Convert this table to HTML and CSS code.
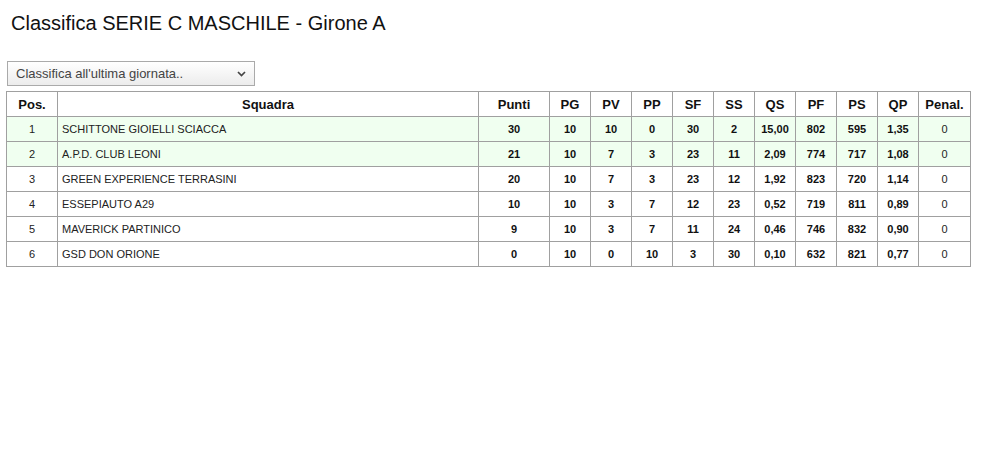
FILE: index.html
```html
<!DOCTYPE html>
<html lang="it">
<head>
<meta charset="utf-8">
<title>Classifica</title>
<link rel="stylesheet" href="styles.css">
</head>
<body>
<div class="page">
  <h1 class="title">Classifica SERIE C MASCHILE - Girone A</h1>
  <div class="select">
    <span>Classifica all'ultima giornata..</span>
    <svg class="chev" width="9" height="6" viewBox="0 0 9 6"><path d="M1 1 L4.5 4.5 L8 1" fill="none" stroke="#444" stroke-width="1.7"/></svg>
  </div>
  <table class="standings">
    <colgroup>
      <col class="c-pos"><col class="c-team"><col class="c-pts">
      <col class="c-n"><col class="c-n"><col class="c-n"><col class="c-n"><col class="c-n">
      <col class="c-n"><col class="c-n"><col class="c-n"><col class="c-n"><col class="c-pen">
    </colgroup>
    <thead>
      <tr><th>Pos.</th><th>Squadra</th><th>Punti</th><th>PG</th><th>PV</th><th>PP</th><th>SF</th><th>SS</th><th>QS</th><th>PF</th><th>PS</th><th>QP</th><th>Penal.</th></tr>
    </thead>
    <tbody>
      <tr class="hl"><td>1</td><td class="team">SCHITTONE GIOIELLI SCIACCA</td><td class="b">30</td><td class="b">10</td><td class="b">10</td><td class="b">0</td><td class="b">30</td><td class="b">2</td><td class="b">15,00</td><td class="b">802</td><td class="b">595</td><td class="b">1,35</td><td>0</td></tr>
      <tr class="hl"><td>2</td><td class="team">A.P.D. CLUB LEONI</td><td class="b">21</td><td class="b">10</td><td class="b">7</td><td class="b">3</td><td class="b">23</td><td class="b">11</td><td class="b">2,09</td><td class="b">774</td><td class="b">717</td><td class="b">1,08</td><td>0</td></tr>
      <tr><td>3</td><td class="team">GREEN EXPERIENCE TERRASINI</td><td class="b">20</td><td class="b">10</td><td class="b">7</td><td class="b">3</td><td class="b">23</td><td class="b">12</td><td class="b">1,92</td><td class="b">823</td><td class="b">720</td><td class="b">1,14</td><td>0</td></tr>
      <tr><td>4</td><td class="team">ESSEPIAUTO A29</td><td class="b">10</td><td class="b">10</td><td class="b">3</td><td class="b">7</td><td class="b">12</td><td class="b">23</td><td class="b">0,52</td><td class="b">719</td><td class="b">811</td><td class="b">0,89</td><td>0</td></tr>
      <tr><td>5</td><td class="team">MAVERICK PARTINICO</td><td class="b">9</td><td class="b">10</td><td class="b">3</td><td class="b">7</td><td class="b">11</td><td class="b">24</td><td class="b">0,46</td><td class="b">746</td><td class="b">832</td><td class="b">0,90</td><td>0</td></tr>
      <tr><td>6</td><td class="team">GSD DON ORIONE</td><td class="b">0</td><td class="b">10</td><td class="b">0</td><td class="b">10</td><td class="b">3</td><td class="b">30</td><td class="b">0,10</td><td class="b">632</td><td class="b">821</td><td class="b">0,77</td><td>0</td></tr>
    </tbody>
  </table>
</div>
</body>
</html>
```
FILE: styles.css
```css
html, body {
  margin: 0;
  padding: 0;
  background: #fff;
  font-family: "Liberation Sans", Arial, sans-serif;
  color: #000;
}
.page {
  padding: 11px 18px 0 6px;
}
.title {
  margin: 0 0 0 5px;
  font-size: 20px;
  font-weight: normal;
  line-height: 24px;
  color: #111;
}
.select {
  margin: 26px 0 5px 1px;
  border: 1px solid #aaa;
  background: linear-gradient(#ffffff, #ececec);
  display: flex;
  align-items: center;
  justify-content: space-between;
  padding: 0 8px 0 8px;
  box-sizing: border-box;
  width: 248px;
  height: 25px;
  font-size: 13px;
  color: #444;
}
.chev { display: block; }
.standings {
  width: 964px;
  border-collapse: collapse;
  table-layout: fixed;
  font-size: 11px;
}
.c-pos { width: 51px; }
.c-team { width: 421px; }
.c-pts { width: 71px; }
.c-n { width: 41px; }
.c-pen { width: 52px; }
.standings th, .standings td {
  border: 1px solid #a0a0a0;
  height: 25px;
  padding: 0 4px;
  text-align: center;
  box-sizing: border-box;
}
.standings th {
  font-size: 13px;
  font-weight: bold;
  color: #111;
}
.standings td { color: #222; }
.standings td.team { text-align: left; padding-left: 4px; }
.standings td.b { font-weight: bold; color: #111; }
.standings tr.hl td { background: #f0fff0; }
```
